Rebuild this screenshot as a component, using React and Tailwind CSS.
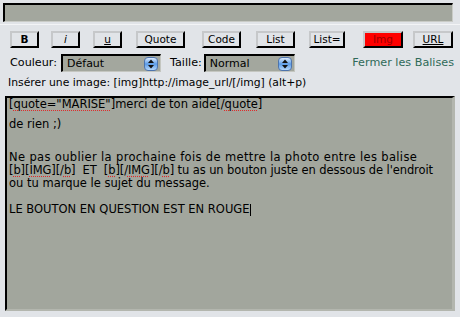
import React from 'react';

const sq = 'underline decoration-dotted decoration-[#e02a2a] underline-offset-[2px]';

function Btn({ w, ml, children, className = '' }) {
  return (
    <div
      className={`h-[17px] flex items-center justify-center border-2 border-t-[#c6c8ca] border-l-[#c6c8ca] border-r-black border-b-black text-[10.5px] leading-none ${className}`}
      style={{ width: w, marginLeft: ml }}
    >
      {children}
    </div>
  );
}

function Arrows() {
  return (
    <span className="w-[14px] h-[14px] rounded-[4px] border border-[#4d74ad] bg-linear-to-b from-[#dcebfc] via-[#5b9be6] to-[#b5d7fa] flex items-center justify-center">
      <svg width="8" height="10" viewBox="0 0 8 10">
        <path d="M4 0.5 L7 4 L1 4 Z" fill="#111" />
        <path d="M4 9.5 L7 6 L1 6 Z" fill="#111" />
      </svg>
    </span>
  );
}

function Select({ w, label }) {
  return (
    <div
      className="h-[18px] flex items-center justify-between bg-[#a3a79e] border-t-2 border-l-2 border-black border-r border-b border-r-[#c4c6c0] border-b-[#c4c6c0] pl-[4px] pr-[2px]"
      style={{ width: w }}
    >
      <span className="text-[11px] leading-none text-black">{label}</span>
      <Arrows />
    </div>
  );
}

export default function App() {
  return (
    <div className="w-[460px] h-[317px] bg-[#e1e4e8] pt-[3px] font-['DejaVu_Sans',sans-serif] text-black overflow-hidden">
      <div className="ml-[3px] w-[450px] h-[19px] bg-[#a3a79e] border-t-2 border-l-2 border-black border-r border-b border-r-[#c9cbc6] border-b-[#c9cbc6]" />
      <div className="mt-[2px] h-px bg-[#f3f4f6]" />

      <div className="mt-[6px] flex items-center">
        <Btn w={29} ml={10} className="font-bold">B</Btn>
        <Btn w={29} ml={12} className="italic">i</Btn>
        <Btn w={29} ml={13} className="underline">u</Btn>
        <Btn w={49} ml={14}>Quote</Btn>
        <Btn w={39} ml={17}>Code</Btn>
        <Btn w={39} ml={15}>List</Btn>
        <Btn w={36} ml={14}>List=</Btn>
        <Btn w={40} ml={18} className="bg-[#ff0000] text-[#9c0000]">Img</Btn>
        <Btn w={40} ml={10} className="underline">URL</Btn>
      </div>

      <div className="mt-[6px] h-[18px] flex items-center text-[11.2px] leading-none">
        <span className="ml-[10px]">Couleur:</span>
        <div className="ml-[4px]"><Select w={100} label="Défaut" /></div>
        <span className="ml-[9px]">Taille:</span>
        <div className="ml-[2px]"><Select w={91} label="Normal" /></div>
        <span className="ml-auto mr-[6px] text-[#2f6a58]">Fermer les Balises</span>
      </div>

      <div className="mt-[4px] h-[14px] flex items-center pl-[8px] text-[10.8px] leading-none">
        Insérer une image: [img]http://image_url/[/img] (alt+p)
      </div>

      <div className="mt-[6px] ml-[5px] w-[450px] h-[215px] bg-[#a2a69d] border-t-2 border-l-2 border-black border-r-[3px] border-b-2 border-r-[#b3b6ae] border-b-[#b3b6ae] pl-[2px] text-[11.5px] leading-[13px] whitespace-pre">
        <div>
          [<span className={sq}>quote="MARISE"</span>]merci de ton aide[/<span className={sq}>quote</span>]
        </div>
        <div className="mt-[7px]">de rien ;)</div>
        <div className="mt-[20px] tracking-[0.35px]">Ne pas oublier la prochaine fois de mettre la photo entre les balise</div>
        <div className="tracking-[-0.1px]">
          [<span className={sq}>b</span>][<span className={sq}>IMG</span>][/<span className={sq}>b</span>]  ET  [<span className={sq}>b</span>][/<span className={sq}>IMG</span>][/<span className={sq}>b</span>] tu as un bouton juste en dessous de l'endroit
        </div>
        <div>ou tu marque le sujet du message.</div>
        <div className="mt-[13px] flex items-center">
          LE BOUTON EN QUESTION EST EN ROUGE<span className="inline-block w-px h-[12px] bg-black" />
        </div>
      </div>
    </div>
  );
}
